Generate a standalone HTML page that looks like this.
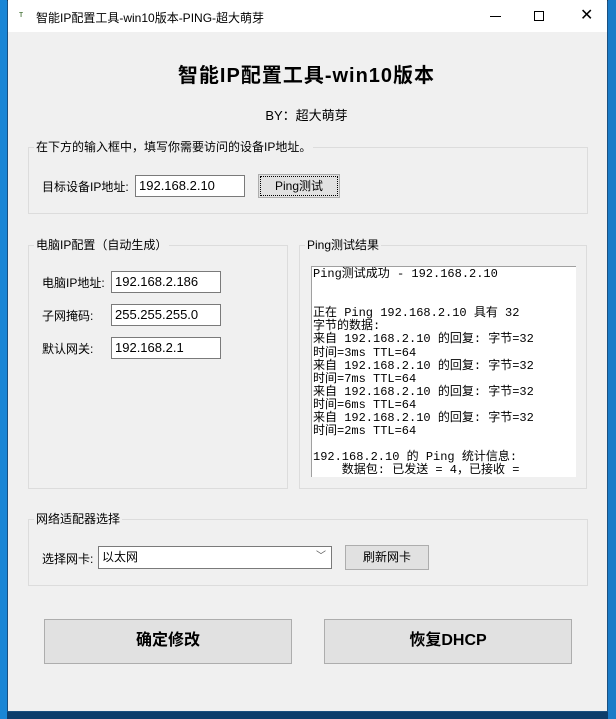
<!DOCTYPE html>
<html><head><meta charset="utf-8"><style>
*{margin:0;padding:0;box-sizing:border-box}
body{width:616px;height:719px;overflow:hidden;background:#0c3d6b;position:relative;font-family:"Liberation Sans","Noto Sans CJK SC",sans-serif;font-size:12px;color:#000}
.a{position:absolute}
.win{left:7px;top:0;width:601px;height:712px;background:#f0f0f0;border:1px solid #1a4f7f;border-top:1px solid #222}
.title{left:0;top:-1px;width:599px;height:32px;background:#fff}
.gb{position:absolute;border:1px solid #dcdcdc}
.lg{position:absolute;background:#f0f0f0;padding:0 2px;top:-9px;left:5px;font-size:12px;color:#000;line-height:16px}
.inp{position:absolute;background:#fff;border:1px solid #7a7a7a;font-size:13px;line-height:20px;padding-left:3px}
.btn{position:absolute;background:#e1e1e1;border:1px solid #adadad;text-align:center;font-size:12px}
.lbl{position:absolute;font-size:12px}
.big{font-size:16px;font-weight:bold;line-height:42px}
pre{font-family:"Liberation Mono","Noto Sans CJK SC",monospace;font-size:12px;line-height:13.1px}
</style></head><body>
<div class="a" style="left:0;top:0;width:7px;height:719px;background:#1a86d6"></div>
<div class="a" style="left:608px;top:0;width:8px;height:719px;background:#1a7cc8"></div>
<div class="a win">
 <div class="a title">
  <div class="a" style="left:11px;top:9px;font-size:9px;color:#3a6a2a">ᴛ</div>
  <div class="a" style="left:28px;top:9px;font-size:12px">智能IP配置工具-win10版本-PING-超大萌芽</div>
  <div class="a" style="left:482px;top:16px;width:11px;height:1px;background:#000"></div>
  <div class="a" style="left:526px;top:11px;width:10px;height:10px;border:1px solid #000"></div>
  <div class="a" style="left:572px;top:5px;font-size:16px;font-weight:300">✕</div>
 </div>
 <div class="a" style="left:-1px;top:58px;width:599px;text-align:center;font-size:20px;font-weight:bold;letter-spacing:1px">智能IP配置工具-win10版本</div>
 <div class="a" style="left:-1px;top:104px;width:599px;text-align:center;font-size:13px">BY：超大萌芽</div>

 <div class="gb" style="left:20px;top:146px;width:560px;height:67px"><div class="lg">在下方的输入框中，填写你需要访问的设备IP地址。</div></div>
 <div class="lbl" style="left:34px;top:177px">目标设备IP地址:</div>
 <div class="inp" style="left:127px;top:174px;width:110px;height:22px">192.168.2.10</div>
 <div class="btn" style="left:250px;top:173px;width:82px;height:24px;line-height:22px;outline:1px dotted #000;outline-offset:-3px">Ping测试</div>

 <div class="gb" style="left:20px;top:244px;width:260px;height:244px"><div class="lg">电脑IP配置（自动生成）</div></div>
 <div class="lbl" style="left:34px;top:273px">电脑IP地址:</div>
 <div class="inp" style="left:103px;top:270px;width:110px;height:22px">192.168.2.186</div>
 <div class="lbl" style="left:34px;top:306px">子网掩码:</div>
 <div class="inp" style="left:103px;top:303px;width:110px;height:22px">255.255.255.0</div>
 <div class="lbl" style="left:34px;top:339px">默认网关:</div>
 <div class="inp" style="left:103px;top:336px;width:110px;height:22px">192.168.2.1</div>

 <div class="gb" style="left:291px;top:244px;width:288px;height:244px"><div class="lg">Ping测试结果</div></div>
 <div class="a" style="left:303px;top:265px;width:265px;height:211px;background:#fff;border-top:1px solid #a0a0a0;border-left:1px solid #a0a0a0;overflow:hidden;padding:1px 1px"><pre>Ping测试成功 - 192.168.2.10


正在 Ping 192.168.2.10 具有 32
字节的数据:
来自 192.168.2.10 的回复: 字节=32
时间=3ms TTL=64
来自 192.168.2.10 的回复: 字节=32
时间=7ms TTL=64
来自 192.168.2.10 的回复: 字节=32
时间=6ms TTL=64
来自 192.168.2.10 的回复: 字节=32
时间=2ms TTL=64

192.168.2.10 的 Ping 统计信息:
    数据包: 已发送 = 4，已接收 =</pre></div>

 <div class="gb" style="left:20px;top:518px;width:560px;height:67px"><div class="lg">网络适配器选择</div></div>
 <div class="lbl" style="left:34px;top:549px">选择网卡:</div>
 <div class="inp" style="left:90px;top:545px;width:234px;height:23px;font-size:12px">以太网<span style="position:absolute;right:5px;top:0;font-size:10px;color:#555">﹀</span></div>
 <div class="btn" style="left:337px;top:544px;width:84px;height:25px;line-height:23px">刷新网卡</div>

 <div class="btn big" style="left:36px;top:618px;width:248px;height:45px">确定修改</div>
 <div class="btn big" style="left:316px;top:618px;width:248px;height:45px">恢复DHCP</div>
</div>
</body></html>
